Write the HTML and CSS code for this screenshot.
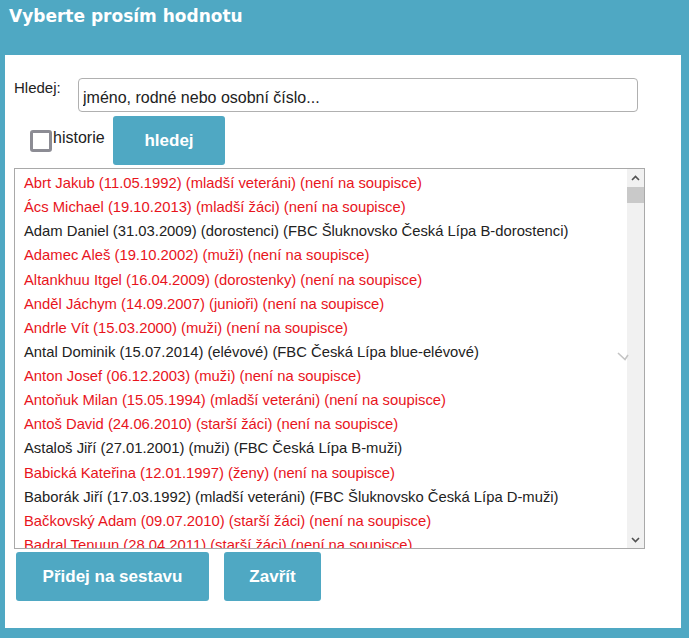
FILE: index.html
```html
<!DOCTYPE html>
<html lang="cs">
<head>
<meta charset="utf-8">
<title>Vyberte prosím hodnotu</title>
<link rel="stylesheet" href="styles.css">
</head>
<body>
<div class="dialog">
  <div class="titlebar">Vyberte prosím hodnotu</div>
  <div class="panel">
    <div class="search-row">
      <label class="search-label" for="q">Hledej:</label>
      <input class="search-input" id="q" type="text" placeholder="jméno, rodné nebo osobní číslo...">
    </div>
    <div class="filter-row">
      <label class="history"><span class="checkbox"></span><span class="history-text">historie</span></label>
      <button class="btn btn-search">hledej</button>
    </div>
    <div class="listbox">
      <div class="options">
        <div class="opt red">Abrt Jakub (11.05.1992) (mladší veteráni) (není na soupisce)</div>
        <div class="opt red">Ács Michael (19.10.2013) (mladší žáci) (není na soupisce)</div>
        <div class="opt">Adam Daniel (31.03.2009) (dorostenci) (FBC Šluknovsko Česká Lípa B-dorostenci)</div>
        <div class="opt red">Adamec Aleš (19.10.2002) (muži) (není na soupisce)</div>
        <div class="opt red">Altankhuu Itgel (16.04.2009) (dorostenky) (není na soupisce)</div>
        <div class="opt red">Anděl Jáchym (14.09.2007) (junioři) (není na soupisce)</div>
        <div class="opt red">Andrle Vít (15.03.2000) (muži) (není na soupisce)</div>
        <div class="opt">Antal Dominik (15.07.2014) (elévové) (FBC Česká Lípa blue-elévové)</div>
        <div class="opt red">Anton Josef (06.12.2003) (muži) (není na soupisce)</div>
        <div class="opt red">Antoňuk Milan (15.05.1994) (mladší veteráni) (není na soupisce)</div>
        <div class="opt red">Antoš David (24.06.2010) (starší žáci) (není na soupisce)</div>
        <div class="opt">Astaloš Jiří (27.01.2001) (muži) (FBC Česká Lípa B-muži)</div>
        <div class="opt red">Babická Kateřina (12.01.1997) (ženy) (není na soupisce)</div>
        <div class="opt">Baborák Jiří (17.03.1992) (mladší veteráni) (FBC Šluknovsko Česká Lípa D-muži)</div>
        <div class="opt red">Bačkovský Adam (09.07.2010) (starší žáci) (není na soupisce)</div>
        <div class="opt red">Badral Tenuun (28.04.2011) (starší žáci) (není na soupisce)</div>
      </div>
      <div class="scrollbar">
        <div class="sb-btn"><svg width="9" height="6" viewBox="0 0 9 6"><path d="M1 5 L4.5 1.5 L8 5" fill="none" stroke="#505050" stroke-width="1.6"/></svg></div>
        <div class="sb-thumb"></div>
        <div class="sb-track"></div>
        <div class="sb-btn"><svg width="9" height="6" viewBox="0 0 9 6"><path d="M1 1 L4.5 4.5 L8 1" fill="none" stroke="#505050" stroke-width="1.6"/></svg></div>
      </div>
      <svg class="ghost-chevron" width="12" height="9" viewBox="0 0 12 9"><path d="M1 1 L8 7.5 L11 3" fill="none" stroke="#c4c4c4" stroke-width="1.6"/></svg>
    </div>
    <div class="actions">
      <button class="btn btn-add">Přidej na sestavu</button>
      <button class="btn btn-close">Zavřít</button>
    </div>
  </div>
</div>
</body>
</html>
```
FILE: styles.css
```css
html, body {
  margin: 0;
  padding: 0;
}
body {
  background: #4fa8c3;
  font-family: "Liberation Sans", Arial, sans-serif;
  font-size: 15px;
  color: #333;
  width: 689px;
  height: 638px;
  overflow: hidden;
}
.dialog {
  display: flex;
  flex-direction: column;
  height: 638px;
}
.titlebar {
  height: 55px;
  box-sizing: border-box;
  padding: 5px 0 0 9px;
  font-family: "DejaVu Sans", Verdana, sans-serif;
  font-weight: bold;
  font-size: 17px;
  color: #fff;
  line-height: 22px;
}
.panel {
  background: #fff;
  margin: 0 8px 10px 5px;
  height: 573px;
  box-sizing: border-box;
  padding: 23px 0 0 9px;
  display: flex;
  flex-direction: column;
}
.search-row {
  display: flex;
  align-items: flex-start;
}
.search-label {
  width: 64px;
  padding-top: 1px;
  line-height: 18px;
  font-size: 15px;
  color: #222;
}
.search-input {
  width: 560px;
  height: 34px;
  box-sizing: border-box;
  border: 1px solid #b0b0b0;
  border-radius: 4px;
  padding: 5px 4px 0 4px;
  font-family: "Liberation Sans", Arial, sans-serif;
  font-size: 16px;
  outline: none;
}
.search-input::placeholder {
  color: #222;
  opacity: 1;
}
.filter-row {
  display: flex;
  align-items: flex-start;
  margin-top: 4px;
  height: 49px;
}
.history {
  display: flex;
  align-items: flex-start;
  margin-left: 16px;
  margin-top: 14px;
  width: 83px;
}
.checkbox {
  width: 22px;
  height: 22px;
  box-sizing: border-box;
  border: 3px solid #8c8c94;
  border-radius: 3px;
  background: #fff;
}
.history-text {
  margin-left: 1px;
  margin-top: -1px;
  line-height: 18px;
  font-size: 16px;
  color: #222;
}
.btn {
  background: #4fa8c3;
  color: #fff;
  border: none;
  border-radius: 3px;
  font-family: "Liberation Sans", Arial, sans-serif;
  font-weight: bold;
  font-size: 17px;
  height: 49px;
  padding: 0;
  cursor: pointer;
}
.btn-search {
  width: 112px;
}
.listbox {
  position: relative;
  margin-top: 3px;
  width: 631px;
  height: 381px;
  box-sizing: border-box;
  border: 1px solid #a9a9a9;
  display: flex;
}
.options {
  flex: 1;
  overflow: hidden;
  padding-top: 2px;
}
.opt {
  height: 24.13px;
  line-height: 24px;
  padding-left: 9px;
  font-size: 14.8px;
  white-space: nowrap;
  color: #222;
}
.opt.red {
  color: #e8141c;
}
.scrollbar {
  width: 17px;
  background: #f1f1f1;
  display: flex;
  flex-direction: column;
}
.sb-btn {
  height: 17px;
  display: flex;
  align-items: center;
  justify-content: center;
}
.sb-thumb {
  height: 16px;
  background: #c9c9c9;
  margin: 1px 0 0;
}
.sb-track {
  flex: 1;
}
.ghost-chevron {
  position: absolute;
  left: 602px;
  top: 183px;
}
.actions {
  display: flex;
  gap: 15px;
  margin-top: 3px;
  padding-left: 2px;
}
.btn-add {
  width: 193px;
}
.btn-close {
  width: 97px;
}
```
